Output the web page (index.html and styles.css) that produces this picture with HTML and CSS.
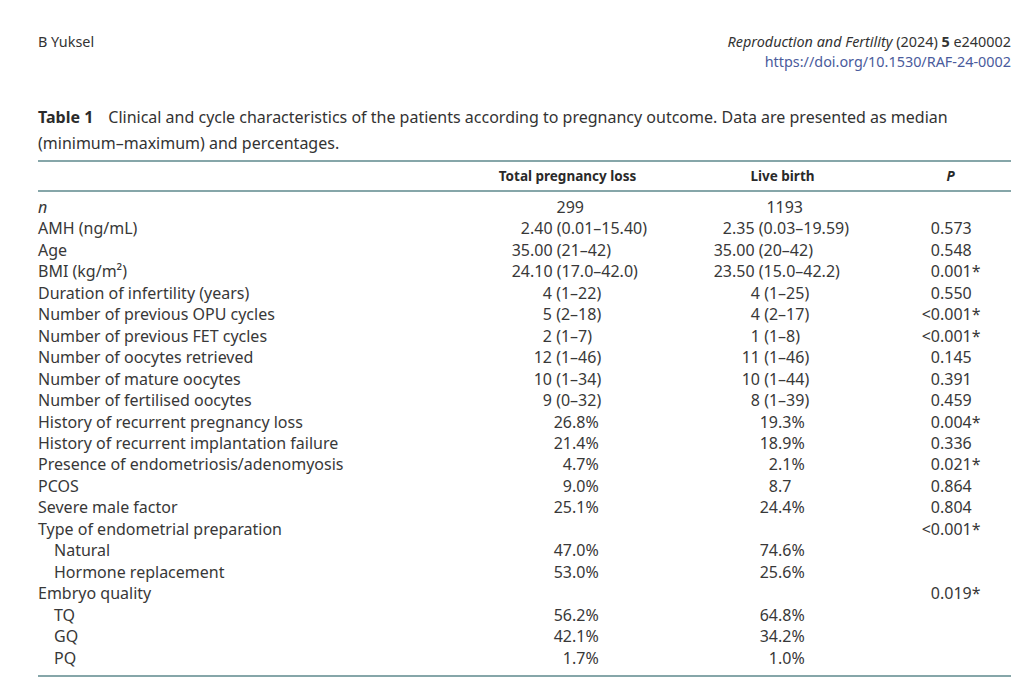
FILE: index.html
```html
<!DOCTYPE html>
<html lang="en">
<head>
  <meta charset="UTF-8">
  <meta name="viewport" content="width=device-width, initial-scale=1.0">
  <title>Table 1 – Reproduction and Fertility</title>
  <link rel="stylesheet" href="styles.css">
</head>
<body>
  <div class="page">
    <header class="running-head">
      <div class="author">B Yuksel</div>
      <div class="journal">
        <div><i>Reproduction and Fertility</i> (2024) <b>5</b> e240002</div>
        <a class="doi" href="#">https://doi.org/10.1530/RAF-24-0002</a>
      </div>
    </header>

    <p class="caption"><b>Table 1</b>Clinical and cycle characteristics of the patients according to pregnancy outcome. Data are presented as median (minimum–maximum) and percentages.</p>

    <table class="data">
      <colgroup>
        <col class="col-label">
        <col class="col-loss">
        <col class="col-live">
        <col class="col-p">
      </colgroup>
      <thead>
        <tr>
          <th></th>
          <th>Total pregnancy loss</th>
          <th>Live birth</th>
          <th><i>P</i></th>
        </tr>
      </thead>
      <tbody>
        <tr class="count first">
          <td><i>n</i></td>
          <td class="c2"><span class="int">299</span></td>
          <td class="c3"><span class="int">1193</span></td>
          <td class="p"></td>
        </tr>
        <tr class="mean">
          <td>AMH (ng/mL)</td>
          <td class="c2"><span class="int">2</span>.40 (0.01–15.40)</td>
          <td class="c3"><span class="int">2</span>.35 (0.03–19.59)</td>
          <td class="p"><span class="int">0</span>.573</td>
        </tr>
        <tr class="mean">
          <td>Age</td>
          <td class="c2"><span class="int">35</span>.00 (21–42)</td>
          <td class="c3"><span class="int">35</span>.00 (20–42)</td>
          <td class="p"><span class="int">0</span>.548</td>
        </tr>
        <tr class="mean">
          <td>BMI (kg/m²)</td>
          <td class="c2"><span class="int">24</span>.10 (17.0–42.0)</td>
          <td class="c3"><span class="int">23</span>.50 (15.0–42.2)</td>
          <td class="p"><span class="int">0</span>.001*</td>
        </tr>
        <tr class="range">
          <td>Duration of infertility (years)</td>
          <td class="c2"><span class="int">4</span> (1–22)</td>
          <td class="c3"><span class="int">4</span> (1–25)</td>
          <td class="p"><span class="int">0</span>.550</td>
        </tr>
        <tr class="range">
          <td>Number of previous OPU cycles</td>
          <td class="c2"><span class="int">5</span> (2–18)</td>
          <td class="c3"><span class="int">4</span> (2–17)</td>
          <td class="p"><span class="int">&lt;0</span>.001*</td>
        </tr>
        <tr class="range">
          <td>Number of previous FET cycles</td>
          <td class="c2"><span class="int">2</span> (1–7)</td>
          <td class="c3"><span class="int">1</span> (1–8)</td>
          <td class="p"><span class="int">&lt;0</span>.001*</td>
        </tr>
        <tr class="range">
          <td>Number of oocytes retrieved</td>
          <td class="c2"><span class="int">12</span> (1–46)</td>
          <td class="c3"><span class="int">11</span> (1–46)</td>
          <td class="p"><span class="int">0</span>.145</td>
        </tr>
        <tr class="range">
          <td>Number of mature oocytes</td>
          <td class="c2"><span class="int">10</span> (1–34)</td>
          <td class="c3"><span class="int">10</span> (1–44)</td>
          <td class="p"><span class="int">0</span>.391</td>
        </tr>
        <tr class="range">
          <td>Number of fertilised oocytes</td>
          <td class="c2"><span class="int">9</span> (0–32)</td>
          <td class="c3"><span class="int">8</span> (1–39)</td>
          <td class="p"><span class="int">0</span>.459</td>
        </tr>
        <tr class="pct">
          <td>History of recurrent pregnancy loss</td>
          <td class="c2"><span class="int">26</span>.8%</td>
          <td class="c3"><span class="int">19</span>.3%</td>
          <td class="p"><span class="int">0</span>.004*</td>
        </tr>
        <tr class="pct">
          <td>History of recurrent implantation failure</td>
          <td class="c2"><span class="int">21</span>.4%</td>
          <td class="c3"><span class="int">18</span>.9%</td>
          <td class="p"><span class="int">0</span>.336</td>
        </tr>
        <tr class="pct">
          <td>Presence of endometriosis/adenomyosis</td>
          <td class="c2"><span class="int">4</span>.7%</td>
          <td class="c3"><span class="int">2</span>.1%</td>
          <td class="p"><span class="int">0</span>.021*</td>
        </tr>
        <tr class="pct">
          <td>PCOS</td>
          <td class="c2"><span class="int">9</span>.0%</td>
          <td class="c3"><span class="int">8</span>.7</td>
          <td class="p"><span class="int">0</span>.864</td>
        </tr>
        <tr class="pct">
          <td>Severe male factor</td>
          <td class="c2"><span class="int">25</span>.1%</td>
          <td class="c3"><span class="int">24</span>.4%</td>
          <td class="p"><span class="int">0</span>.804</td>
        </tr>
        <tr class="pct">
          <td>Type of endometrial preparation</td>
          <td class="c2"></td>
          <td class="c3"></td>
          <td class="p"><span class="int">&lt;0</span>.001*</td>
        </tr>
        <tr class="pct sub">
          <td>Natural</td>
          <td class="c2"><span class="int">47</span>.0%</td>
          <td class="c3"><span class="int">74</span>.6%</td>
          <td class="p"></td>
        </tr>
        <tr class="pct sub">
          <td>Hormone replacement</td>
          <td class="c2"><span class="int">53</span>.0%</td>
          <td class="c3"><span class="int">25</span>.6%</td>
          <td class="p"></td>
        </tr>
        <tr class="pct">
          <td>Embryo quality</td>
          <td class="c2"></td>
          <td class="c3"></td>
          <td class="p"><span class="int">0</span>.019*</td>
        </tr>
        <tr class="pct sub">
          <td>TQ</td>
          <td class="c2"><span class="int">56</span>.2%</td>
          <td class="c3"><span class="int">64</span>.8%</td>
          <td class="p"></td>
        </tr>
        <tr class="pct sub">
          <td>GQ</td>
          <td class="c2"><span class="int">42</span>.1%</td>
          <td class="c3"><span class="int">34</span>.2%</td>
          <td class="p"></td>
        </tr>
        <tr class="pct sub last">
          <td>PQ</td>
          <td class="c2"><span class="int">1</span>.7%</td>
          <td class="c3"><span class="int">1</span>.0%</td>
          <td class="p"></td>
        </tr>
      </tbody>
    </table>
  </div>
</body>
</html>
```

FILE: styles.css
```css
body {
  margin: 0;
  background: #ffffff;
  color: #383838;
  font-family: "Noto Sans", "Open Sans", sans-serif;
}

.page {
  width: 973px;
  padding: 32px 24px 0 38px;
}

.running-head {
  display: flex;
  justify-content: space-between;
  font-size: 14.4px;
  line-height: 20px;
  color: #333;
}

.journal {
  text-align: right;
}

.journal b {
  font-weight: 700;
}

.doi {
  color: #4a5b9c;
  text-decoration: none;
}

.caption {
  margin: 32px 0 4px;
  font-size: 16px;
  line-height: 26px;
  color: #333;
}

.caption b {
  margin-right: 15px;
  color: #2b2b2b;
}

.data {
  width: 973px;
  table-layout: fixed;
  border-collapse: collapse;
  font-size: 16px;
  border-bottom: 2px solid #86a6a9;
}

.col-label { width: 422px; }
.col-loss { width: 215px; }
.col-live { width: 215px; }
.col-p { width: 121px; }

.data thead tr {
  border-top: 2px solid #86a6a9;
  border-bottom: 2px solid #86a6a9;
}

.data th {
  height: 27px;
  padding: 0 0 1px;
  font-size: 13.5px;
  font-weight: 700;
  color: #2a2a2a;
  text-align: center;
  white-space: nowrap;
}

.data td {
  padding: 0;
  height: 21.45px;
  line-height: 21.45px;
  white-space: nowrap;
}

.data tr.first td {
  padding-top: 5px;
}

.data tr.last td {
  padding-bottom: 6px;
}

.data tr.sub td:first-child {
  padding-left: 16px;
}

.int {
  display: inline-block;
  text-align: right;
}

/* decimal point positions, measured from each column's left edge */
.count .c2 .int { width: 124px; }
.count .c3 .int { width: 128px; }

.mean .c2 .int { width: 70px; }
.mean .c3 .int { width: 57px; }

.range .c2 .int { width: 92px; }
.range .c3 .int { width: 85px; }

.pct .c2 .int { width: 112px; }
.pct .c3 .int { width: 103px; }

.p .int { width: 50px; }
```
